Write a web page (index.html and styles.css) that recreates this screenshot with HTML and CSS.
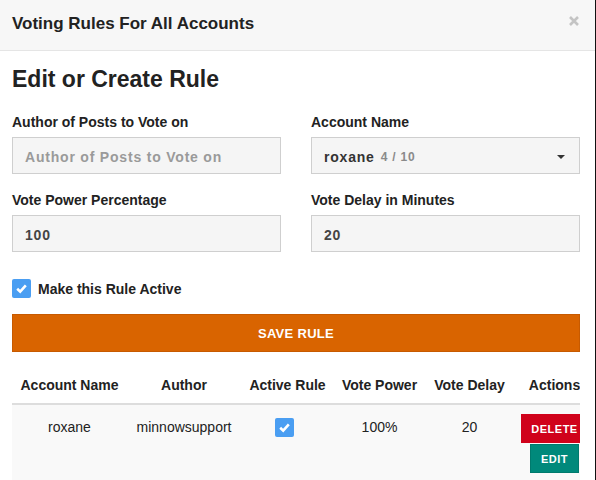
FILE: index.html
```html
<!DOCTYPE html>
<html>
<head>
<meta charset="utf-8">
<link rel="stylesheet" href="styles.css">
</head>
<body>
<div class="modal">
  <div class="modal-header">
    <h4 class="modal-title">Voting Rules For All Accounts</h4>
    <svg class="close" width="10" height="10" viewBox="0 0 10 10"><path d="M1 1L9 9M9 1L1 9" stroke="#c4c4c4" stroke-width="2.6" stroke-linecap="butt"/></svg>
  </div>
  <div class="modal-body">
    <h2 class="heading">Edit or Create Rule</h2>
    <div class="form-grid">
      <div class="field">
        <label class="label">Author of Posts to Vote on</label>
        <div class="input placeholder">Author of Posts to Vote on</div>
      </div>
      <div class="field">
        <label class="label">Account Name</label>
        <div class="input select"><span class="acct">roxane</span><span class="count">4 / 10</span><span class="caret"></span></div>
      </div>
      <div class="field">
        <label class="label">Vote Power Percentage</label>
        <div class="input">100</div>
      </div>
      <div class="field">
        <label class="label">Vote Delay in Minutes</label>
        <div class="input">20</div>
      </div>
    </div>
    <div class="check-row">
      <span class="checkbox"><svg width="19" height="19" viewBox="0 0 19 19"><path d="M5.2 9.8L8.2 12.6L13.8 6.4" stroke="#fff" stroke-width="2.6" fill="none"/></svg></span>
      <span class="check-label">Make this Rule Active</span>
    </div>
    <button class="save">SAVE RULE</button>
    <div class="table-wrap">
      <table class="rules">
        <colgroup>
          <col class="c1"><col class="c2"><col class="c3"><col class="c4"><col class="c5"><col class="c6">
        </colgroup>
        <thead>
          <tr><th>Account Name</th><th>Author</th><th>Active Rule</th><th>Vote Power</th><th>Vote Delay</th><th>Actions</th></tr>
        </thead>
        <tbody>
          <tr>
            <td>roxane</td>
            <td>minnowsupport</td>
            <td><span class="checkbox small"><svg width="19" height="19" viewBox="0 0 19 19"><path d="M5.2 9.8L8.2 12.6L13.8 6.4" stroke="#fff" stroke-width="2.6" fill="none"/></svg></span></td>
            <td>100%</td>
            <td>20</td>
            <td class="actions">
              <div class="action-stack">
                <button class="btn delete">DELETE</button>
                <button class="btn edit">EDIT</button>
              </div>
            </td>
          </tr>
        </tbody>
      </table>
    </div>
  </div>
</div>
</body>
</html>
```
FILE: styles.css
```css
html, body {
  margin: 0;
  padding: 0;
  background: #111;
}
body {
  font-family: "Liberation Sans", Arial, sans-serif;
  color: #222;
}
.modal {
  width: 595px;
  height: 480px;
  background: #fff;
  overflow: hidden;
}
.modal-header {
  box-sizing: border-box;
  height: 51px;
  background: #f7f7f7;
  border-bottom: 1px solid #e5e5e5;
  padding: 14px 16px 0 12px;
  display: flex;
  align-items: flex-start;
}
.modal-title {
  margin: 0;
  font-size: 17px;
  line-height: 19px;
  font-weight: bold;
  color: #222;
}
.close {
  margin-left: auto;
  margin-top: 2px;
}
.modal-body {
  padding: 0 15px 0 12px;
}
.heading {
  margin: 16px 0 0;
  font-size: 23px;
  line-height: 25px;
  font-weight: bold;
  color: #222;
}
.form-grid {
  margin-top: 20px;
  display: grid;
  grid-template-columns: 269px 269px;
  column-gap: 30px;
  row-gap: 16px;
}
.field {
  display: flex;
  flex-direction: column;
}
.label {
  font-size: 14px;
  line-height: 20px;
  font-weight: bold;
  color: #222;
  margin-bottom: 5px;
}
.input {
  box-sizing: border-box;
  height: 37px;
  border: 1px solid #cfcfcf;
  background: #f5f5f5;
  padding: 2px 12px 0;
  display: flex;
  align-items: center;
  font-size: 14px;
  font-weight: bold;
  letter-spacing: 0.8px;
  color: #444;
}
.placeholder {
  color: #9a9a9a;
}
.select .acct {
  color: #333;
}
.select .count {
  color: #8a8a8a;
  font-size: 12px;
  margin-left: 6px;
  letter-spacing: 0.8px;
}
.caret {
  margin-left: auto;
  margin-right: 2px;
  width: 0;
  height: 0;
  border-left: 4px solid transparent;
  border-right: 4px solid transparent;
  border-top: 4px solid #333;
}
.check-row {
  margin-top: 27px;
  display: flex;
  align-items: center;
  height: 19px;
}
.checkbox {
  display: inline-flex;
  width: 19px;
  height: 19px;
  background: #4a9ef2;
  border-radius: 2px;
}
.check-label {
  margin-left: 7px;
  font-size: 14px;
  font-weight: bold;
  color: #222;
}
.save {
  display: block;
  margin-top: 16px;
  width: 568px;
  height: 38px;
  box-sizing: border-box;
  background: #d96400;
  border: 1px solid #c75a00;
  color: #fff;
  font-family: "Liberation Sans", Arial, sans-serif;
  font-size: 13px;
  font-weight: bold;
  letter-spacing: 0.3px;
  padding: 0;
}
.table-wrap {
  margin-top: 15px;
  width: 568px;
  overflow: hidden;
}
.rules {
  table-layout: fixed;
  width: 583px;
  border-collapse: collapse;
  border-spacing: 0;
}
.c1 { width: 115px; }
.c2 { width: 114px; }
.c3 { width: 93px; }
.c4 { width: 91px; }
.c5 { width: 89px; }
.c6 { width: 81px; }
.rules th {
  padding: 8px 0;
  font-size: 14px;
  line-height: 20px;
  font-weight: bold;
  color: #222;
  text-align: center;
  border-bottom: 2px solid #dddddd;
  white-space: nowrap;
}
.rules td {
  background: #f9f9f9;
  padding: 12px 0 0;
  height: 63px;
  vertical-align: top;
  text-align: center;
  font-size: 14px;
  line-height: 20px;
  color: #222;
}
.checkbox.small {
  margin-top: 1px;
  margin-right: 6px;
  vertical-align: top;
}
.rules td.actions {
  padding: 9px 0 7px;
}
.action-stack {
  display: flex;
  flex-direction: column;
  align-items: center;
  gap: 1px;
}
.btn {
  box-sizing: border-box;
  height: 29px;
  border: none;
  color: #fff;
  font-family: "Liberation Sans", Arial, sans-serif;
  font-size: 11px;
  font-weight: bold;
  letter-spacing: 0.5px;
  padding: 0;
  flex: none;
}
.delete {
  width: 67px;
  background: #d0021b;
}
.edit {
  width: 49px;
  background: #00897b;
  border: 1px solid #007a6d;
}
```
